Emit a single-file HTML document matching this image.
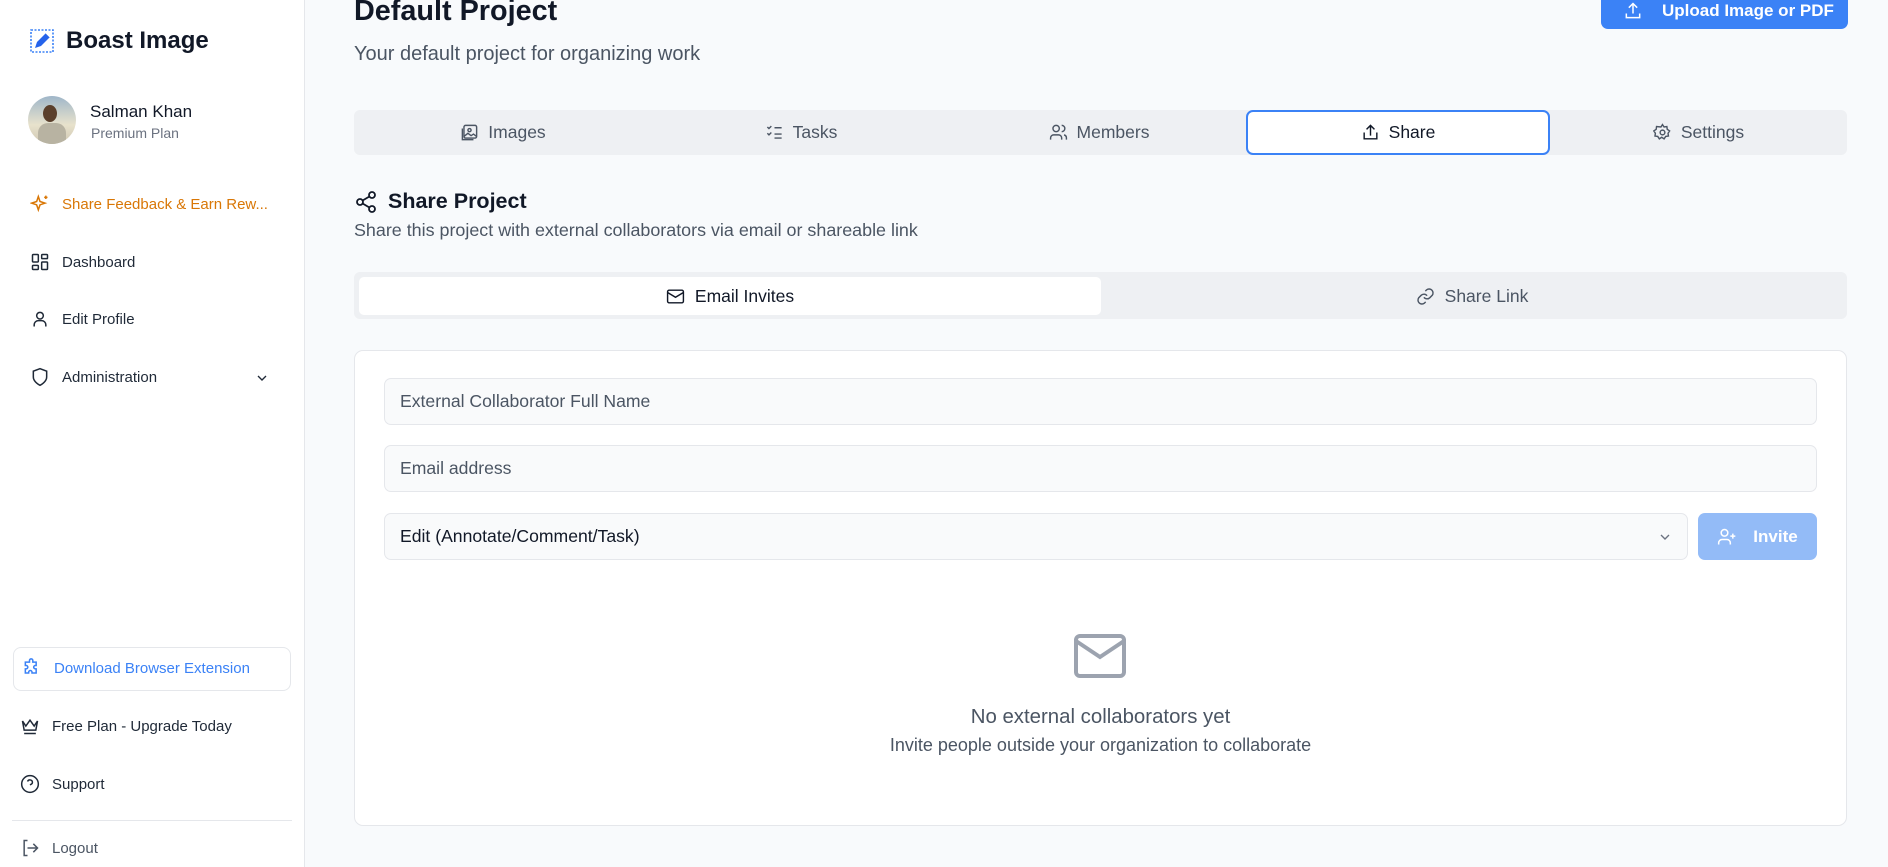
<!DOCTYPE html>
<html><head><meta charset="utf-8"><style>
*{box-sizing:border-box;margin:0;padding:0}
body{width:1888px;height:867px;overflow:hidden;background:#f8fafc;font-family:"Liberation Sans",sans-serif;color:#1f2937;position:relative}
.sb{position:absolute;left:0;top:0;width:305px;height:867px;background:#fff;border-right:1px solid #e5e7eb}
.a{position:absolute}
svg{display:block}
.nav{position:absolute;left:30px;display:flex;align-items:center;font-size:15px;color:#1f2937}
.nav svg{margin-right:12px}
.tab{position:absolute;top:110px;height:45px;display:flex;align-items:center;justify-content:center;font-size:17.5px;color:#4b5563}
.tab svg{margin-right:9px}
.inp{position:absolute;left:384px;width:1433px;height:47px;border:1px solid #e5e7eb;border-radius:7px;background:#f9fafb;font-size:17.6px;color:#4b5563;padding-left:15px;display:flex;align-items:center}
</style></head><body>
<div class="sb">
 <div class="a" style="left:30px;top:29px"><svg width="24" height="24" viewBox="0 0 24 24"><rect x="1" y="1" width="22" height="22" fill="none" stroke="#3b82f6" stroke-width="1.6" stroke-dasharray="2 1.5"/><path d="M5 19l2-6 9-9 4 4-9 9z" fill="#2563eb"/><path d="M16 4l4 4" stroke="#fff" stroke-width="1.2"/></svg></div>
 <div class="a" style="left:66px;top:27px;font-size:24px;font-weight:bold;color:#111827">Boast Image</div>
 <div class="a" style="left:28px;top:96px;width:48px;height:48px;border-radius:50%;background:linear-gradient(#9fb6c9,#e8e2cc 60%,#cfc7b3);overflow:hidden"><div style="position:absolute;left:15px;top:9px;width:14px;height:17px;border-radius:50%;background:#5a3f2c"></div><div style="position:absolute;left:10px;top:27px;width:28px;height:24px;border-radius:10px 10px 0 0;background:#b8b3a2"></div></div>
 <div class="a" style="left:90px;top:102px;font-size:17px;color:#111827">Salman Khan</div>
 <div class="a" style="left:91px;top:125px;font-size:14px;color:#6b7280">Premium Plan</div>
 <div class="nav" style="top:194px;color:#d97706"><svg width="20" height="20" viewBox="0 0 24 24" fill="none" stroke="#d97706" stroke-width="1.8"><path d="M10 3l2 6 6 2-6 2-2 6-2-6-6-2 6-2z"/><path d="M19 2v4M17 4h4"/></svg>Share Feedback &amp; Earn Rew...</div>
 <div class="nav" style="top:252px"><svg width="20" height="20" viewBox="0 0 24 24" fill="none" stroke="#1f2937" stroke-width="1.8"><rect x="3" y="3" width="7" height="9" rx="1"/><rect x="14" y="3" width="7" height="5" rx="1"/><rect x="14" y="12" width="7" height="9" rx="1"/><rect x="3" y="16" width="7" height="5" rx="1"/></svg>Dashboard</div>
 <div class="nav" style="top:309px"><svg width="20" height="20" viewBox="0 0 24 24" fill="none" stroke="#1f2937" stroke-width="1.8"><circle cx="12" cy="8" r="4"/><path d="M5 21v-2a5 5 0 0 1 5-5h4a5 5 0 0 1 5 5v2"/></svg>Edit Profile</div>
 <div class="nav" style="top:367px"><svg width="20" height="20" viewBox="0 0 24 24" fill="none" stroke="#1f2937" stroke-width="1.8"><path d="M12 22s8-4 8-10V5l-8-3-8 3v7c0 6 8 10 8 10z"/></svg>Administration</div>
 <div class="a" style="left:254px;top:370px"><svg width="16" height="16" viewBox="0 0 24 24" fill="none" stroke="#1f2937" stroke-width="2"><path d="M6 9l6 6 6-6"/></svg></div>
 <div class="a" style="left:13px;top:647px;width:278px;height:44px;border:1px solid #e5e7eb;border-radius:8px"></div>
 <div class="nav" style="top:658px;left:22px;color:#3b82f6"><svg width="20" height="20" viewBox="0 0 24 24" fill="none" stroke="#3b82f6" stroke-width="1.8"><path d="M9 3a2 2 0 0 1 4 0v2h4v4h-1a2 2 0 0 0 0 4h1v5h-5v-1a2 2 0 0 0-4 0v1H4v-5h1a2 2 0 0 0 0-4H4V5h5z"/></svg>Download Browser Extension</div>
 <div class="nav" style="top:716px;left:20px"><svg width="20" height="20" viewBox="0 0 24 24" fill="none" stroke="#1f2937" stroke-width="1.8"><path d="M3 6l4 6 5-7 5 7 4-6-2 11H5z"/><path d="M5 21h14"/></svg>Free Plan - Upgrade Today</div>
 <div class="nav" style="top:774px;left:20px"><svg width="20" height="20" viewBox="0 0 24 24" fill="none" stroke="#1f2937" stroke-width="1.8"><circle cx="12" cy="12" r="10"/><path d="M9.1 9a3 3 0 0 1 5.8 1c0 2-3 3-3 3"/><path d="M12 17h.01"/></svg>Support</div>
 <div class="a" style="left:12px;top:820px;width:280px;height:1px;background:#e5e7eb"></div>
 <div class="nav" style="top:838px;left:20px;color:#4b5563"><svg width="20" height="20" viewBox="0 0 24 24" fill="none" stroke="#4b5563" stroke-width="1.8"><path d="M9 21H5V3h4M16 17l5-5-5-5M21 12H9"/></svg>Logout</div>
</div>

<div class="a" style="left:354px;top:-5px;font-size:28.8px;font-weight:bold;color:#111827">Default Project</div>
<div class="a" style="left:354px;top:43px;font-size:20px;color:#4b5563">Your default project for organizing work</div>
<div class="a" style="left:1601px;top:-8px;width:247px;height:37px;background:#3b82f6;border-radius:7px;color:#fff;font-size:17px;font-weight:bold;display:flex;align-items:center;padding-left:22px"><svg width="20" height="20" viewBox="0 0 24 24" fill="none" stroke="#fff" stroke-width="1.8" style="margin-right:19px"><path d="M4 15v5h16v-5M12 3v12M7 8l5-5 5 5"/></svg>Upload Image or PDF</div>

<div class="a" style="left:354px;top:110px;width:1493px;height:45px;background:#eef0f3;border-radius:6px"></div>
<div class="tab" style="left:354px;width:298px"><svg width="19" height="19" viewBox="0 0 24 24" fill="none" stroke="#4b5563" stroke-width="1.8"><rect x="5" y="3" width="16" height="16" rx="2"/><path d="M3 7v14h14"/><circle cx="12" cy="9" r="2"/><path d="M5 17l5-4 4 3 3-2 4 3"/></svg>Images</div>
<div class="tab" style="left:652px;width:298px"><svg width="19" height="19" viewBox="0 0 24 24" fill="none" stroke="#4b5563" stroke-width="1.8"><path d="M3 5l2 2 3-3M3 13l2 2 3-3M12 6h9M12 14h9M12 19h9"/></svg>Tasks</div>
<div class="tab" style="left:950px;width:298px"><svg width="19" height="19" viewBox="0 0 24 24" fill="none" stroke="#4b5563" stroke-width="1.8"><circle cx="9" cy="7" r="4"/><path d="M2 21v-2a4 4 0 0 1 4-4h6a4 4 0 0 1 4 4v2M16 3a4 4 0 0 1 0 8M22 21v-2a4 4 0 0 0-3-4"/></svg>Members</div>
<div class="tab" style="left:1246px;width:304px;background:#fff;border:2px solid #3b82f6;border-radius:7px;color:#111827"><svg width="19" height="19" viewBox="0 0 24 24" fill="none" stroke="#111827" stroke-width="1.8"><path d="M4 12v8h16v-8M12 3v13M7 8l5-5 5 5"/></svg>Share</div>
<div class="tab" style="left:1550px;width:297px"><svg width="19" height="19" viewBox="0 0 24 24" fill="none" stroke="#4b5563" stroke-width="1.8"><circle cx="12" cy="12" r="3"/><path d="M12 2l2 3 3.5-.5.5 3.5 3 2-2 3 .5 3.5-3.5.5-2 3-3-2-3 2-2-3-3.5-.5.5-3.5-2-3 3-2 .5-3.5L10 5z"/></svg>Settings</div>

<div class="a" style="left:354px;top:189px;display:flex;align-items:center;font-size:21.5px;font-weight:bold;color:#111827"><svg width="24" height="24" viewBox="0 0 24 24" fill="none" stroke="#111827" stroke-width="1.8" style="margin-right:10px"><circle cx="18" cy="5" r="3"/><circle cx="6" cy="12" r="3"/><circle cx="18" cy="19" r="3"/><path d="M8.6 13.5l6.8 4M15.4 6.5l-6.8 4"/></svg>Share Project</div>
<div class="a" style="left:354px;top:220px;font-size:17.9px;color:#4b5563">Share this project with external collaborators via email or shareable link</div>

<div class="a" style="left:354px;top:272px;width:1493px;height:47px;background:#eef0f3;border-radius:6px"></div>
<div class="a" style="left:359px;top:277px;width:742px;height:38px;background:#fff;border-radius:5px;display:flex;align-items:center;justify-content:center;font-size:17.5px;color:#111827"><svg width="19" height="19" viewBox="0 0 24 24" fill="none" stroke="#111827" stroke-width="1.8" style="margin-right:10px"><rect x="2" y="4" width="20" height="16" rx="2"/><path d="M22 7l-10 6L2 7"/></svg>Email Invites</div>
<div class="a" style="left:1101px;top:277px;width:742px;height:38px;display:flex;align-items:center;justify-content:center;font-size:17.5px;color:#4b5563"><svg width="19" height="19" viewBox="0 0 24 24" fill="none" stroke="#4b5563" stroke-width="1.8" style="margin-right:10px"><path d="M10 13a5 5 0 0 0 7.5.5l3-3a5 5 0 0 0-7-7l-1.7 1.7M14 11a5 5 0 0 0-7.5-.5l-3 3a5 5 0 0 0 7 7l1.7-1.7"/></svg>Share Link</div>

<div class="a" style="left:354px;top:350px;width:1493px;height:476px;background:#fff;border:1px solid #e5e7eb;border-radius:9px"></div>
<div class="inp" style="top:378px">External Collaborator Full Name</div>
<div class="inp" style="top:445px">Email address</div>
<div class="inp" style="top:513px;width:1304px;color:#111827">Edit (Annotate/Comment/Task)<svg width="16" height="16" viewBox="0 0 24 24" fill="none" stroke="#6b7280" stroke-width="2" style="position:absolute;right:14px;top:15px"><path d="M6 9l6 6 6-6"/></svg></div>
<div class="a" style="left:1698px;top:513px;width:119px;height:47px;background:#93bbf7;border-radius:7px;display:flex;align-items:center;justify-content:center;color:#fff;font-weight:bold;font-size:17px"><svg width="20" height="20" viewBox="0 0 24 24" fill="none" stroke="#fff" stroke-width="1.8" style="margin-right:16px"><circle cx="9" cy="7" r="4"/><path d="M2 21v-2a4 4 0 0 1 4-4h6a4 4 0 0 1 4 4v2M19 8v6M16 11h6"/></svg>Invite</div>

<div class="a" style="left:1073px;top:633px"><svg width="54" height="46" viewBox="0 0 54 46" fill="none" stroke="#9ca3af" stroke-width="4"><rect x="3" y="3" width="48" height="40" rx="4"/><path d="M3 8l24 16 24-16"/></svg></div>
<div class="a" style="left:354px;width:1493px;top:706px;text-align:center;font-size:20.4px;color:#4b5563">No external collaborators yet</div>
<div class="a" style="left:354px;width:1493px;top:735px;text-align:center;font-size:18px;color:#4b5563">Invite people outside your organization to collaborate</div>
</body></html>
